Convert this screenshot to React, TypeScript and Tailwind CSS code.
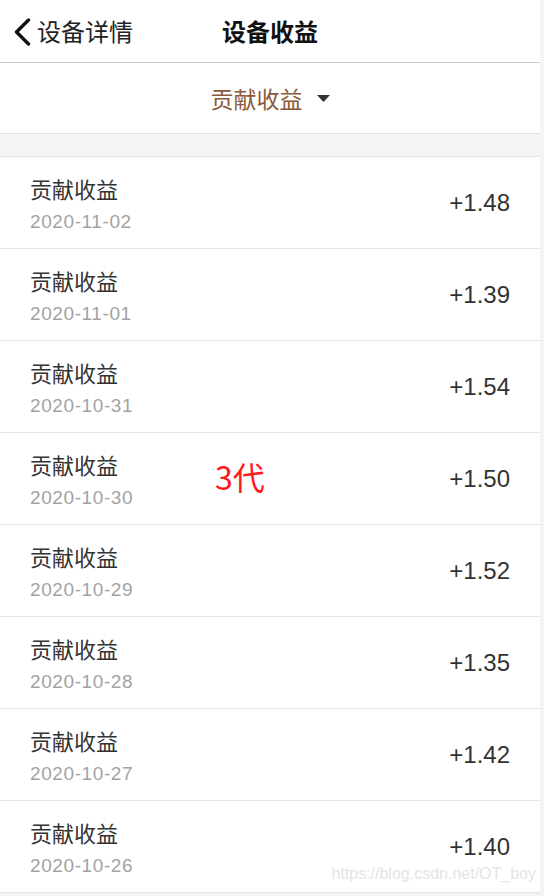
interface EarningRow {
  date: string;
  amount: string;
}

const rows: EarningRow[] = [
  { date: '2020-11-02', amount: '+1.48' },
  { date: '2020-11-01', amount: '+1.39' },
  { date: '2020-10-31', amount: '+1.54' },
  { date: '2020-10-30', amount: '+1.50' },
  { date: '2020-10-29', amount: '+1.52' },
  { date: '2020-10-28', amount: '+1.35' },
  { date: '2020-10-27', amount: '+1.42' },
  { date: '2020-10-26', amount: '+1.40' },
];

const cjk = "font-['Noto_Sans_CJK_SC','Noto_Sans',sans-serif]";

export default function App() {
  return (
    <div className="min-h-[896px] bg-[#f4f4f4]">
      <div className={`w-[540px] bg-white ${cjk}`}>
        <header className="grid h-[63px] grid-cols-[1fr_auto_1fr] items-center border-b border-[#c9c9c9]">
          <div className="flex items-center gap-[6px] pl-[13px] text-[24px] text-[#222]">
            <svg width="18" height="28" viewBox="0 0 18 28" className="mt-[1px]">
              <path d="M15.5 2 L3.5 14 L15.5 26" fill="none" stroke="#111" strokeWidth="3.4" strokeLinecap="round" strokeLinejoin="round" />
            </svg>
            <span>设备详情</span>
          </div>
          <h1 className="text-[24px] font-bold text-[#111]">设备收益</h1>
          <div />
        </header>

        <div className="flex h-[71px] items-center justify-center gap-[14px] border-b border-[#e2e2e2]">
          <span className="text-[23px] text-[#8a5a3b]">贡献收益</span>
          <svg width="13" height="7" viewBox="0 0 13 7" className="mt-[1px]">
            <path d="M0 0 H13 L6.5 7 Z" fill="#333" />
          </svg>
        </div>

        <div className="h-[23px] border-b border-[#e2e2e2] bg-[#f4f4f4]" />

        <ul>
          {rows.map((row, i) => (
            <li
              key={row.date}
              className="relative flex h-[92px] items-center justify-between border-b border-[#e6e6e6] px-[30px]"
            >
              <div className="flex flex-col">
                <span className="text-[22px] leading-[30px] text-[#333]">贡献收益</span>
                <span className="mt-[8px] font-['Liberation_Sans',sans-serif] text-[19px] leading-[22px] tracking-[0.6px] text-[#a3a3a3]">
                  {row.date}
                </span>
              </div>
              <span className="font-['Liberation_Sans',sans-serif] text-[24px] text-[#333]">{row.amount}</span>

              {i === 3 && (
                <span className="absolute left-[215px] top-[19px] text-[32px] text-[#ff1a1a]">3代</span>
              )}
              {i === rows.length - 1 && (
                <span className="absolute bottom-[6px] right-[4px] font-['Liberation_Sans',sans-serif] text-[16px] text-[#e4e4e4]">
                  https://blog.csdn.net/OT_boy
                </span>
              )}
            </li>
          ))}
        </ul>
      </div>
    </div>
  );
}
